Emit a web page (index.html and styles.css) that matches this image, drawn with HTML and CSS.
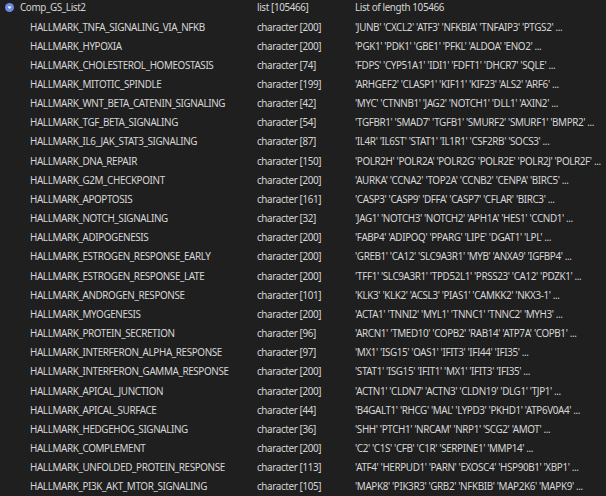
FILE: index.html
```html
<!DOCTYPE html>
<html>
<head>
<meta charset="utf-8">
<link rel="stylesheet" href="styles.css">
</head>
<body>
<div class="list">
  <div class="row head">
    <div class="name"><svg class="toggle" width="9" height="9" viewBox="0 0 9 9"><circle cx="4.5" cy="4.5" r="4.5" fill="#6a88e6"/><path d="M2.4 3.4h4.2L4.5 5.9z" fill="#fff"/></svg>Comp_GS_List2</div>
    <div class="type">list [105466]</div>
    <div class="value">List of length 105466</div>
  </div>
  <div class="row"><div class="name">HALLMARK_TNFA_SIGNALING_VIA_NFKB</div><div class="type">character [200]</div><div class="value">'JUNB' 'CXCL2' 'ATF3' 'NFKBIA' 'TNFAIP3' 'PTGS2' ...</div></div>
  <div class="row"><div class="name">HALLMARK_HYPOXIA</div><div class="type">character [200]</div><div class="value">'PGK1' 'PDK1' 'GBE1' 'PFKL' 'ALDOA' 'ENO2' ...</div></div>
  <div class="row"><div class="name">HALLMARK_CHOLESTEROL_HOMEOSTASIS</div><div class="type">character [74]</div><div class="value">'FDPS' 'CYP51A1' 'IDI1' 'FDFT1' 'DHCR7' 'SQLE' ...</div></div>
  <div class="row"><div class="name">HALLMARK_MITOTIC_SPINDLE</div><div class="type">character [199]</div><div class="value">'ARHGEF2' 'CLASP1' 'KIF11' 'KIF23' 'ALS2' 'ARF6' ...</div></div>
  <div class="row"><div class="name">HALLMARK_WNT_BETA_CATENIN_SIGNALING</div><div class="type">character [42]</div><div class="value">'MYC' 'CTNNB1' 'JAG2' 'NOTCH1' 'DLL1' 'AXIN2' ...</div></div>
  <div class="row"><div class="name">HALLMARK_TGF_BETA_SIGNALING</div><div class="type">character [54]</div><div class="value">'TGFBR1' 'SMAD7' 'TGFB1' 'SMURF2' 'SMURF1' 'BMPR2' ...</div></div>
  <div class="row"><div class="name">HALLMARK_IL6_JAK_STAT3_SIGNALING</div><div class="type">character [87]</div><div class="value">'IL4R' 'IL6ST' 'STAT1' 'IL1R1' 'CSF2RB' 'SOCS3' ...</div></div>
  <div class="row"><div class="name">HALLMARK_DNA_REPAIR</div><div class="type">character [150]</div><div class="value">'POLR2H' 'POLR2A' 'POLR2G' 'POLR2E' 'POLR2J' 'POLR2F' ...</div></div>
  <div class="row"><div class="name">HALLMARK_G2M_CHECKPOINT</div><div class="type">character [200]</div><div class="value">'AURKA' 'CCNA2' 'TOP2A' 'CCNB2' 'CENPA' 'BIRC5' ...</div></div>
  <div class="row"><div class="name">HALLMARK_APOPTOSIS</div><div class="type">character [161]</div><div class="value">'CASP3' 'CASP9' 'DFFA' 'CASP7' 'CFLAR' 'BIRC3' ...</div></div>
  <div class="row"><div class="name">HALLMARK_NOTCH_SIGNALING</div><div class="type">character [32]</div><div class="value">'JAG1' 'NOTCH3' 'NOTCH2' 'APH1A' 'HES1' 'CCND1' ...</div></div>
  <div class="row"><div class="name">HALLMARK_ADIPOGENESIS</div><div class="type">character [200]</div><div class="value">'FABP4' 'ADIPOQ' 'PPARG' 'LIPE' 'DGAT1' 'LPL' ...</div></div>
  <div class="row"><div class="name">HALLMARK_ESTROGEN_RESPONSE_EARLY</div><div class="type">character [200]</div><div class="value">'GREB1' 'CA12' 'SLC9A3R1' 'MYB' 'ANXA9' 'IGFBP4' ...</div></div>
  <div class="row"><div class="name">HALLMARK_ESTROGEN_RESPONSE_LATE</div><div class="type">character [200]</div><div class="value">'TFF1' 'SLC9A3R1' 'TPD52L1' 'PRSS23' 'CA12' 'PDZK1' ...</div></div>
  <div class="row"><div class="name">HALLMARK_ANDROGEN_RESPONSE</div><div class="type">character [101]</div><div class="value">'KLK3' 'KLK2' 'ACSL3' 'PIAS1' 'CAMKK2' 'NKX3-1' ...</div></div>
  <div class="row"><div class="name">HALLMARK_MYOGENESIS</div><div class="type">character [200]</div><div class="value">'ACTA1' 'TNNI2' 'MYL1' 'TNNC1' 'TNNC2' 'MYH3' ...</div></div>
  <div class="row"><div class="name">HALLMARK_PROTEIN_SECRETION</div><div class="type">character [96]</div><div class="value">'ARCN1' 'TMED10' 'COPB2' 'RAB14' 'ATP7A' 'COPB1' ...</div></div>
  <div class="row"><div class="name">HALLMARK_INTERFERON_ALPHA_RESPONSE</div><div class="type">character [97]</div><div class="value">'MX1' 'ISG15' 'OAS1' 'IFIT3' 'IFI44' 'IFI35' ...</div></div>
  <div class="row"><div class="name">HALLMARK_INTERFERON_GAMMA_RESPONSE</div><div class="type">character [200]</div><div class="value">'STAT1' 'ISG15' 'IFIT1' 'MX1' 'IFIT3' 'IFI35' ...</div></div>
  <div class="row"><div class="name">HALLMARK_APICAL_JUNCTION</div><div class="type">character [200]</div><div class="value">'ACTN1' 'CLDN7' 'ACTN3' 'CLDN19' 'DLG1' 'TJP1' ...</div></div>
  <div class="row"><div class="name">HALLMARK_APICAL_SURFACE</div><div class="type">character [44]</div><div class="value">'B4GALT1' 'RHCG' 'MAL' 'LYPD3' 'PKHD1' 'ATP6V0A4' ...</div></div>
  <div class="row"><div class="name">HALLMARK_HEDGEHOG_SIGNALING</div><div class="type">character [36]</div><div class="value">'SHH' 'PTCH1' 'NRCAM' 'NRP1' 'SCG2' 'AMOT' ...</div></div>
  <div class="row"><div class="name">HALLMARK_COMPLEMENT</div><div class="type">character [200]</div><div class="value">'C2' 'C1S' 'CFB' 'C1R' 'SERPINE1' 'MMP14' ...</div></div>
  <div class="row"><div class="name">HALLMARK_UNFOLDED_PROTEIN_RESPONSE</div><div class="type">character [113]</div><div class="value">'ATF4' 'HERPUD1' 'PARN' 'EXOSC4' 'HSP90B1' 'XBP1' ...</div></div>
  <div class="row"><div class="name">HALLMARK_PI3K_AKT_MTOR_SIGNALING</div><div class="type">character [105]</div><div class="value">'MAPK8' 'PIK3R3' 'GRB2' 'NFKBIB' 'MAP2K6' 'MAPK9' ...</div></div>
</div>
</body>
</html>
```
FILE: styles.css
```css
html, body {
  margin: 0;
  padding: 0;
  background: #1f1f1f;
  overflow: hidden;
}
body {
  width: 606px;
  height: 496px;
  font-family: "Noto Sans", "Open Sans", sans-serif;
  font-size: 9.9px;
  letter-spacing: -0.38px;
  color: #d6d6d6;
}
.list {
  margin-top: -2.2px;
}
.row {
  display: grid;
  grid-template-columns: 257px 98px 1fr;
  height: 19.16px;
  align-items: center;
  white-space: nowrap;
}
.name {
  padding-left: 30px;
  overflow: hidden;
}
.head .name {
  padding-left: 5px;
  display: flex;
  align-items: center;
  gap: 6px;
}
.toggle {
  flex: none;
}
.type, .value {
  overflow: hidden;
}
```
